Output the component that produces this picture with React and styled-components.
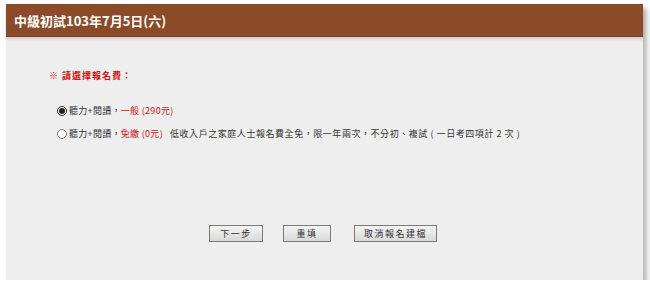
import { createGlobalStyle, styled } from "styled-components";

const GlobalStyle = createGlobalStyle`
  body {
    margin: 0;
    background: #ffffff;
    font-family: "Liberation Sans", "Noto Sans CJK TC", sans-serif;
  }
`;

const Panel = styled.section`
  margin: 4px 0 0 6px;
  width: 637px;
  height: 276px;
  background: #eeeeee;
  box-shadow: 4px 4px 5px rgba(0, 0, 0, 0.28);
  display: flex;
  flex-direction: column;
`;

const Header = styled.header`
  height: 32px;
  background: #8b4b29;
  border-bottom: 1px solid #7a3f20;
  box-shadow: 0 2px 3px rgba(0, 0, 0, 0.15);
  display: flex;
  align-items: center;
  padding-left: 8px;
`;

const Title = styled.h1`
  margin: 0;
  color: #ffffff;
  font-size: 13px;
  font-weight: bold;
  font-family: "Noto Sans CJK TC", sans-serif;
`;

const Body = styled.div`
  flex: 1;
  display: flex;
  flex-direction: column;
  padding: 32px 0 0 43px;
`;

const Heading = styled.div`
  color: #cc1111;
  font-size: 9px;
  font-weight: bold;
  letter-spacing: 1px;
  font-family: "Noto Sans CJK TC", sans-serif;
  line-height: 14px;
  margin-bottom: 21px;
`;

const Options = styled.div`
  display: flex;
  flex-direction: column;
  gap: 9px;
  padding-left: 8px;
`;

const Option = styled.label`
  display: flex;
  align-items: center;
  font-size: 9px;
  color: #333333;
  letter-spacing: 0.3px;
  font-family: "Noto Sans CJK TC", sans-serif;
  line-height: 14px;
  white-space: pre;
`;

const Radio = styled.input`
  margin: 0 2px 0 0;
  width: 10px;
  height: 10px;
  accent-color: #222222;
`;

const Red = styled.span`
  color: #cc1111;
`;

const Note = styled.span`
  margin-left: 7px;
  letter-spacing: 0.55px;
`;

const Actions = styled.div`
  margin-top: 84px;
  padding-left: 160px;
  display: flex;
  gap: 20px;
`;

const Button = styled.button`
  height: 17px;
  width: ${(p) => p.$w}px;
  margin-left: ${(p) => p.$ml || 0}px;
  padding: 0;
  border: 1px solid #7a7a7a;
  background: linear-gradient(#f4f4f4, #d9d9d9);
  font-size: 9px;
  letter-spacing: 1.5px;
  color: #333333;
  font-family: "Noto Sans CJK TC", sans-serif;
  line-height: 14px;
`;

export default function App() {
  return (
    <>
      <GlobalStyle />
      <Panel>
        <Header>
          <Title>中級初試103年7月5日(六)</Title>
        </Header>
        <Body>
          <Heading>※ 請選擇報名費：</Heading>
          <Options>
            <Option>
              <Radio type="radio" name="fee" defaultChecked />
              聽力+閱讀，<Red>一般 (290元)</Red>
            </Option>
            <Option>
              <Radio type="radio" name="fee" />
              聽力+閱讀，<Red>免繳 (0元)</Red>
              <Note>低收入戶之家庭人士報名費全免，限一年兩次，不分初、複試 ( 一日考四項計 2 次 )</Note>
            </Option>
          </Options>
          <Actions>
            <Button $w={54}>下一步</Button>
            <Button $w={48}>重填</Button>
            <Button $w={83} $ml={3}>取消報名建檔</Button>
          </Actions>
        </Body>
      </Panel>
    </>
  );
}
